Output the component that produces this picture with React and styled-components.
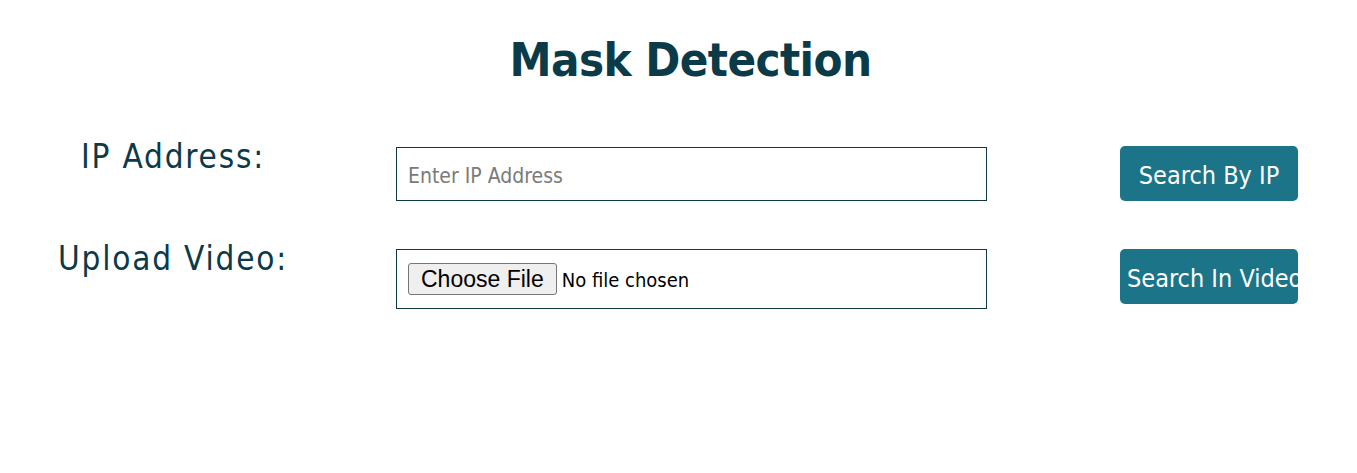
import React from "react";
import styled, { createGlobalStyle } from "styled-components";

const FONT = `"DejaVu Sans Condensed", "Liberation Sans", sans-serif`;
const INK = "#0b3a48";
const TEAL = "#1b7488";

const Global = createGlobalStyle`
  html, body { margin: 0; padding: 0; background: #ffffff; }
  body { font-family: ${FONT}; color: ${INK}; }
`;

const Page = styled.main`
  width: 1357px;
  display: flex;
  flex-direction: column;
`;

const Title = styled.h1`
  margin: 25px 0 0 24px;
  text-align: center;
  font-family: ${FONT};
  font-weight: 700;
  font-size: 47px;
  line-height: 70px;
  color: ${INK};
  letter-spacing: -0.6px;
`;

const Form = styled.form`
  display: flex;
  flex-direction: column;
  gap: 48px;
  margin-top: 51px;
`;

const Row = styled.div`
  display: flex;
  align-items: flex-start;
`;

const Label = styled.label`
  width: 346px;
  text-align: center;
  font-family: ${FONT};
  font-size: 33px;
  line-height: 44px;
  letter-spacing: 1.8px;
  color: ${INK};
  margin-top: ${(p) => p.$offset}px;
`;

const Field = styled.div`
  margin-left: 50px;
  width: 591px;
  height: ${(p) => p.$h}px;
  box-sizing: border-box;
  border: 1px solid #0f3942;
  display: flex;
  align-items: center;
  padding: 0 11px;
  margin-top: ${(p) => p.$top || 0}px;
`;

const TextInput = styled.input`
  border: none;
  outline: none;
  width: 100%;
  padding: 3px 0 0;
  font-family: ${FONT};
  font-size: 21px;
  color: ${INK};
  background: transparent;
  &::placeholder { color: #7a7a7a; }
`;

const FileButton = styled.span`
  display: inline-flex;
  align-items: center;
  box-sizing: border-box;
  height: 32px;
  padding: 0 12px;
  border: 1px solid #767676;
  border-radius: 3px;
  background: #efefef;
  font-family: "Liberation Sans", Arial, sans-serif;
  font-size: 23px;
  color: #000;
`;

const FileName = styled.span`
  margin-left: 5px;
  padding-top: 2px;
  font-family: ${FONT};
  font-size: 20px;
  color: #000;
`;

const Action = styled.button`
  margin-left: 133px;
  width: 178px;
  height: 55px;
  border: none;
  border-radius: 5px;
  background: ${TEAL};
  color: #ffffff;
  font-family: ${FONT};
  font-size: 25px;
  white-space: nowrap;
  overflow: hidden;
  padding: 3px 7px 0;
  text-align: ${(p) => (p.$clip ? "left" : "center")};
  margin-top: ${(p) => p.$top || 0}px;
`;

export default function App() {
  return (
    <Page>
      <Global />
      <Title>Mask Detection</Title>
      <Form onSubmit={(e) => e.preventDefault()}>
        <Row>
          <Label $offset={-11}>IP Address:</Label>
          <Field $h={54} $top={1}>
            <TextInput placeholder="Enter IP Address" />
          </Field>
          <Action type="button">Search By IP</Action>
        </Row>
        <Row>
          <Label $offset={-12}>Upload Video:</Label>
          <Field $h={60}>
            <FileButton>Choose File</FileButton>
            <FileName>No file chosen</FileName>
          </Field>
          <Action type="button" $clip>Search In Video</Action>
        </Row>
      </Form>
    </Page>
  );
}
